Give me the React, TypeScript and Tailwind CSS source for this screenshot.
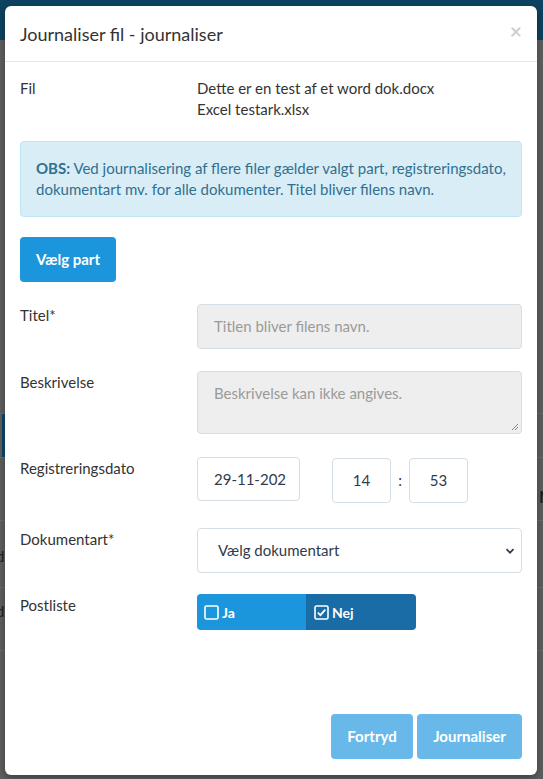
import React from 'react';

function CheckBoxIcon({ checked }: { checked: boolean }) {
  return (
    <svg width="15" height="15" viewBox="0 0 15 15" className="shrink-0">
      <rect x="1" y="1" width="13" height="13" rx="1.5" fill="none" stroke="white" strokeWidth="1.6" />
      {checked && <path d="M3.8 7.6 L6.4 10.2 L11.3 4.6" fill="none" stroke="white" strokeWidth="1.8" />}
    </svg>
  );
}

function Row({ label, className = '', children }: { label: string; className?: string; children: React.ReactNode }) {
  return (
    <div className={`flex items-start ${className}`}>
      <div className="w-[177px] shrink-0 leading-[21px] pt-[1px]">{label}</div>
      <div className="flex-1">{children}</div>
    </div>
  );
}

export default function App() {
  return (
    <div className="relative h-[779px] w-[543px] overflow-hidden bg-[#5f5f5f] font-[Lato,sans-serif] text-[15px] text-[#333]">
      {/* dimmed page behind the dialog */}
      <div className="h-[40px] bg-[#0d4361]" />
      <div className="h-[373px]" />
      <div className="h-[44px] border-t border-[#6c6c6c]">
        <div className="ml-[2px] h-full w-[3px] bg-[#10466a]" />
      </div>
      <div className="h-[63px] border-t border-[#6c6c6c] text-[#1e1e1e]">
        <div className="pl-[539px] pt-[30px] text-[17px] font-bold leading-none">N</div>
      </div>
      <div className="h-[67px] border-t border-[#6c6c6c] text-[#1e1e1e]">
        <div className="-ml-[4px] pt-[28px] leading-none">d</div>
      </div>
      <div className="h-[63px] border-t border-[#6c6c6c] text-[#1e1e1e]">
        <div className="-ml-[4px] pt-[16px] leading-none">d</div>
      </div>
      <div className="h-[62px] border-t border-[#6c6c6c]" />

      {/* dialog */}
      <div className="absolute left-[5px] top-[6px] flex h-[769px] w-[532px] flex-col rounded-[6px] bg-white shadow-[0_3px_9px_rgba(0,0,0,0.35)]">
        <div className="flex h-[56px] shrink-0 items-center justify-between border-b border-[#e5e5e5] pl-[15px] pr-[15px]">
          <h4 className="text-[18px] leading-[24px] text-[#333]">Journaliser fil - journaliser</h4>
          <span className="-mt-[6px] text-[21px] font-bold leading-none text-[#cfcfcf]">×</span>
        </div>

        <div className="flex flex-1 flex-col px-[15px] pt-[16px] pb-[16px]">
          <div className="flex leading-[21px]">
            <div className="w-[177px] shrink-0">Fil</div>
            <div>
              <div>Dette er en test af et word dok.docx</div>
              <div>Excel testark.xlsx</div>
            </div>
          </div>

          <div className="mt-[21px] rounded-[4px] border border-[#bce8f1] bg-[#d9edf7] px-[15px] pt-[16px] pb-[16px] leading-[21px] text-[#31708f]">
            <b>OBS:</b> Ved journalisering af flere filer gælder valgt part, registreringsdato, dokumentart mv. for alle dokumenter. Titel bliver filens navn.
          </div>

          <div className="mt-[20px]">
            <button className="h-[45px] rounded-[4px] bg-[#1b96dc] px-[16px] font-bold text-white">Vælg part</button>
          </div>

          <Row label="Titel*" className="mt-[22px]">
            <div className="flex h-[45px] items-center rounded-[4px] border border-[#d5dde5] bg-[#eeeeee] px-[16px] text-[#9a9a9a]">
              Titlen bliver filens navn.
            </div>
          </Row>

          <Row label="Beskrivelse" className="mt-[22px]">
            <div className="relative h-[63px] rounded-[4px] border border-[#d5dde5] bg-[#eeeeee] px-[16px] pt-[10px] text-[#9a9a9a]">
              Beskrivelse kan ikke angives.
              <svg width="8" height="8" viewBox="0 0 8 8" className="absolute bottom-[2px] right-[2px]">
                <path d="M7 1 L1 7 M7 4 L4 7" stroke="#777" strokeWidth="0.9" />
              </svg>
            </div>
          </Row>

          <Row label="Registreringsdato" className="mt-[23px]">
            <div className="flex items-start">
              <div className="flex h-[44px] w-[103px] items-center overflow-hidden whitespace-nowrap rounded-[4px] border border-[#d5dde5] pl-[16px] text-[#2f3b4c]">
                29-11-202
              </div>
              <div className="ml-[32px] mt-[1px] flex h-[45px] w-[59px] items-center justify-center rounded-[4px] border border-[#d5dde5] text-[#2f3b4c]">
                14
              </div>
              <div className="mt-[1px] flex h-[45px] w-[18px] items-center justify-center text-[#2f3b4c]">:</div>
              <div className="mt-[1px] flex h-[45px] w-[59px] items-center justify-center rounded-[4px] border border-[#d5dde5] text-[#2f3b4c]">
                53
              </div>
            </div>
          </Row>

          <Row label="Dokumentart*" className="mt-[25px]">
            <div className="flex h-[45px] items-center justify-between rounded-[4px] border border-[#d5dde5] pl-[20px] pr-[6px] text-[#2f3b4c]">
              <span>Vælg dokumentart</span>
              <svg width="10" height="10" viewBox="0 0 10 10">
                <path d="M1.5 3.2 L5 6.7 L8.5 3.2" fill="none" stroke="#2f3b4c" strokeWidth="1.7" />
              </svg>
            </div>
          </Row>

          <Row label="Postliste" className="mt-[21px]">
            <div className="flex h-[36px] w-[219px] text-[14px] font-bold text-white">
              <div className="flex w-[109px] items-center gap-[3px] rounded-l-[4px] bg-[#1b96dc] pl-[7px]">
                <CheckBoxIcon checked={false} />
                <span>Ja</span>
              </div>
              <div className="flex flex-1 items-center gap-[3px] rounded-r-[4px] bg-[#196ca6] pl-[8px]">
                <CheckBoxIcon checked />
                <span>Nej</span>
              </div>
            </div>
          </Row>

          <div className="flex-1" />

          <div className="flex justify-end gap-[4px]">
            <button className="h-[45px] w-[82px] rounded-[4px] bg-[#68b9e9] font-bold text-white">Fortryd</button>
            <button className="h-[45px] w-[105px] rounded-[4px] bg-[#68b9e9] font-bold text-white">Journaliser</button>
          </div>
        </div>
      </div>
    </div>
  );
}
